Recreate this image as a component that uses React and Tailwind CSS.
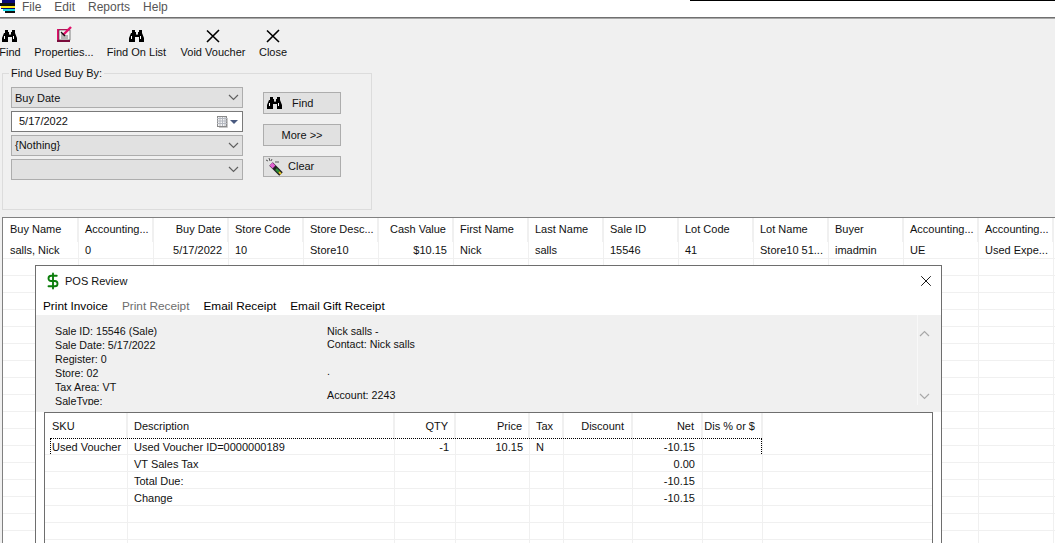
import { X, DollarSign } from 'lucide-react'

const gridCols = [
  { label: 'Buy Name', value: 'salls, Nick', w: 'w-[76px]', pad: 'pl-[7px]' },
  { label: 'Accounting...', value: '0', w: 'w-[75px]', pad: 'pl-[6px]' },
  { label: 'Buy Date', value: '5/17/2022', w: 'w-[75px]', pad: 'justify-end pr-[6px]' },
  { label: 'Store Code', value: '10', w: 'w-[75px]', pad: 'pl-[6px]' },
  { label: 'Store Desc...', value: 'Store10', w: 'w-[75px]', pad: 'pl-[6px]' },
  { label: 'Cash Value', value: '$10.15', w: 'w-[75px]', pad: 'justify-end pr-[6px]' },
  { label: 'First Name', value: 'Nick', w: 'w-[75px]', pad: 'pl-[6px]' },
  { label: 'Last Name', value: 'salls', w: 'w-[75px]', pad: 'pl-[6px]' },
  { label: 'Sale ID', value: '15546', w: 'w-[75px]', pad: 'pl-[6px]' },
  { label: 'Lot Code', value: '41', w: 'w-[75px]', pad: 'pl-[6px]' },
  { label: 'Lot Name', value: 'Store10 51...', w: 'w-[75px]', pad: 'pl-[6px]' },
  { label: 'Buyer', value: 'imadmin', w: 'w-[75px]', pad: 'pl-[6px]' },
  { label: 'Accounting...', value: 'UE', w: 'w-[75px]', pad: 'pl-[6px]' },
  { label: 'Accounting...', value: 'Used Expe...', w: 'w-[75px]', pad: 'pl-[6px]' },
]

const saleCols = [
  { label: 'SKU', w: 'w-[83px]', pad: 'pl-[7px]' },
  { label: 'Description', w: 'w-[267px]', pad: 'pl-[6px]' },
  { label: 'QTY', w: 'w-[61px]', pad: 'pr-[6px] text-right' },
  { label: 'Price', w: 'w-[74px]', pad: 'pr-[6px] text-right' },
  { label: 'Tax', w: 'w-[34px]', pad: 'pl-[6px]' },
  { label: 'Discount', w: 'w-[69px]', pad: 'pr-[7px] text-right' },
  { label: 'Net', w: 'w-[70px]', pad: 'pr-[7px] text-right' },
  { label: 'Dis % or $', w: 'w-[60px]', pad: 'pr-[6px] text-right' },
]

const saleRows = [
  ['Used Voucher', 'Used Voucher ID=0000000189', '-1', '10.15', 'N', '', '-10.15', ''],
  ['', 'VT Sales Tax', '', '', '', '', '0.00', ''],
  ['', 'Total Due:', '', '', '', '', '-10.15', ''],
  ['', 'Change', '', '', '', '', '-10.15', ''],
  ['', '', '', '', '', '', '', ''],
  ['', '', '', '', '', '', '', ''],
  ['', '', '', '', '', '', '', ''],
]

function Binoculars() {
  return (
    <svg width="16" height="14" viewBox="0 0 16 14" className="block">
      <path d="M3 1h3v2h1v2h2V3h1V1h3v3l2 5v4H10V8H6v5H0V9l2-5l1 0z" fill="#000" />
      <rect x="2" y="7" width="1" height="3" fill="#fff" />
      <rect x="11" y="7" width="1" height="3" fill="#fff" />
      <rect x="7" y="5" width="2" height="1" fill="#888" />
    </svg>
  )
}

function Properties() {
  return (
    <svg width="17" height="17" viewBox="0 0 17 17" className="block">
      <rect x="1" y="3" width="13" height="13" fill="#e0106a" />
      <rect x="3" y="4" width="11" height="10" fill="#f4f4f4" stroke="#333" strokeWidth="0.6" />
      <path d="M5 8h3M5 10h7M5 12h7" stroke="#777" strokeWidth="1" />
      <path d="M7 9L15 1" stroke="#e0106a" strokeWidth="2.4" />
      <path d="M5 6l4 4" stroke="#111" strokeWidth="1.2" />
      <rect x="1" y="14" width="13" height="2" fill="#7a0c3c" />
    </svg>
  )
}

function BlackX() {
  return (
    <svg width="14" height="14" viewBox="0 0 14 14" className="block">
      <path d="M1 1.5L13 13M13 1L1 13" stroke="#000" strokeWidth="1.6" />
    </svg>
  )
}

function Wand() {
  return (
    <svg width="18" height="18" viewBox="0 0 18 18" className="block">
      <path d="M0 2l2 1M3 0l1 3M6 1l-1 2M9 4h4" stroke="#333" strokeWidth="0.8" fill="none" />
      <path d="M5 6l10 10" stroke="#222" strokeWidth="5" />
      <path d="M5 6l3 3" stroke="#e060d0" strokeWidth="4" />
      <path d="M10 11l3 3" stroke="#2f8f3a" strokeWidth="2.5" />
      <path d="M13 14l2 2" stroke="#e0c020" strokeWidth="2" />
    </svg>
  )
}

function Logo() {
  return (
    <svg width="16" height="14" viewBox="0 0 16 14" className="block">
      <path d="M2 0h13v3H2z" fill="#0a0a7a" />
      <path d="M0 3h15v3H0z" fill="#101010" />
      <path d="M1 6h14v2H1z" fill="#ffe81a" />
      <path d="M1 8h14v1H1z" fill="#0a0a6a" />
      <path d="M3 9h12v2H3z" fill="#16d8e8" />
      <path d="M5 11h10v2H5z" fill="#101010" />
    </svg>
  )
}

function Chevron({ up, color = '#606060' }) {
  return (
    <svg width="11" height="7" viewBox="0 0 11 7" className="block">
      <path d={up ? 'M1 6l4.5-4.5L10 6' : 'M1 1l4.5 4.5L10 1'} stroke={color} strokeWidth="1.2" fill="none" />
    </svg>
  )
}

function Calendar() {
  return (
    <svg width="11" height="12" viewBox="0 0 11 12" className="block">
      <rect x="0.5" y="0.5" width="9" height="10" fill="#f4f4f4" stroke="#8a8a8a" />
      <path d="M0 2.5h10M0 5h10M0 7.5h10M3 1v9M5.5 1v9M8 1v9" stroke="#b4b8c0" strokeWidth="1" />
      <path d="M10.5 2v9.5H2" stroke="#c8c8c8" fill="none" />
    </svg>
  )
}

function ToolItem({ icon, label, className }) {
  return (
    <div className={`flex flex-col items-center shrink-0 ${className}`}>
      <div className="h-[18px] flex items-end justify-center">{icon}</div>
      <span className="mt-[2px] whitespace-nowrap leading-[14px]">{label}</span>
    </div>
  )
}

function Combo({ text, textClass = '' }) {
  return (
    <div className="h-[21px] w-[232px] border border-[#adadad] bg-[#e1e1e1] flex items-center justify-between pl-[3px] pr-[3px]">
      <span className={textClass}>{text}</span>
      <Chevron />
    </div>
  )
}

function SideButton({ className, children }) {
  return (
    <div className={`w-[78px] border border-[#adadad] bg-[#e1e1e1] flex items-center ${className}`}>{children}</div>
  )
}

export default function App() {
  return (
    <div className="relative w-[1055px] h-[543px] overflow-hidden bg-[#f0f0f0] text-[11px] leading-[14px] text-[#111] font-['Liberation_Sans',Arial,sans-serif]">
      {/* menu */}
      <div className="h-[17px] bg-white flex items-start">
        <div className="w-[16px]"><Logo /></div>
        <div className="flex gap-[13px] ml-[6px] text-[12px] text-[#555]">
          <span>File</span>
          <span>Edit</span>
          <span>Reports</span>
          <span>Help</span>
        </div>
      </div>
      <div className="absolute top-0 left-[690px] right-0 h-px bg-black" />
      <div className="h-px bg-[#707070]" />
      <div className="h-px bg-[#a8a8a8]" />

      {/* toolbar */}
      <div className="flex h-[45px] pt-[6px] items-start">
        <ToolItem icon={<Binoculars />} label="Find" className="w-[20px]" />
        <ToolItem icon={<Properties />} label="Properties..." className="w-[56px] ml-[16px]" />
        <ToolItem icon={<Binoculars />} label="Find On List" className="w-[55px] ml-[17px]" />
        <ToolItem icon={<BlackX />} label="Void Voucher" className="w-[64px] ml-[17px]" />
        <ToolItem icon={<BlackX />} label="Close" className="w-[26px] ml-[15px]" />
      </div>

      {/* search group */}
      <div className="h-[151px]">
        <fieldset className="ml-[2px] mt-[2px] w-[370px] h-[144px] border border-[#dcdcdc] px-[8px] flex">
          <legend className="ml-[-2px] px-[2px] leading-[14px]">Find Used Buy By:</legend>
          <div className="flex">
            <div className="flex flex-col gap-[3px] mt-[7px]">
              <Combo text="Buy Date" />
              <div className="h-[21px] w-[232px] border border-[#7a7a7a] bg-white flex items-center justify-between pl-[7px] pr-[4px]">
                <span className="mb-px">5/17/2022</span>
                <div className="flex items-center gap-[2px]">
                  <Calendar />
                  <div className="w-0 h-0 border-l-[4px] border-r-[4px] border-t-[4px] border-l-transparent border-r-transparent border-t-[#4a5a80]" />
                </div>
              </div>
              <Combo text="{Nothing}" textClass="mb-px" />
              <Combo text="" />
            </div>
            <div className="ml-[20px] mt-[12px] flex flex-col gap-[10px]">
              <SideButton className="h-[22px] pl-[3px]">
                <Binoculars />
                <span className="ml-[9px]">Find</span>
              </SideButton>
              <SideButton className="h-[22px] justify-center">More &gt;&gt;</SideButton>
              <SideButton className="h-[21px] pl-[2px]">
                <Wand />
                <span className="ml-[4px] mb-px">Clear</span>
              </SideButton>
            </div>
          </div>
        </fieldset>
      </div>

      {/* results grid */}
      <div className="ml-[2px] h-[330px] bg-white border-t border-l border-[#808080]">
        <div className="flex h-[24px]">
          {gridCols.map((c, i) => (
            <div key={i} className={`${c.w} shrink-0 flex items-center pb-[2px] border-r-2 border-[#f0f0f0] ${c.pad}`}>
              <span className="whitespace-nowrap">{c.label}</span>
            </div>
          ))}
        </div>
        {[0, 1, 2, 3, 4, 5, 6, 7, 8, 9, 10, 11, 12, 13, 14, 15, 16, 17].map((r) => (
          <div key={r} className="flex h-[17px] border-b border-[#f0f0f0]">
            {gridCols.map((c, i) => (
              <div key={i} className={`${c.w} shrink-0 flex items-center border-r border-[#f0f0f0] ${c.pad}`}>
                {r === 0 && <span className="whitespace-nowrap">{c.value}</span>}
              </div>
            ))}
          </div>
        ))}
      </div>

      {/* POS review dialog */}
      <div className="absolute left-[35px] top-[265px] w-[907px] h-[290px] bg-white border border-[#6e6e6e] flex flex-col">
        <div className="h-[30px] flex items-center shrink-0">
          <DollarSign size={18} strokeWidth={2.5} className="ml-[8px] text-[#0b7d0b]" />
          <span className="ml-[3px]">POS Review</span>
          <X size={18} strokeWidth={1.2} className="ml-auto mr-[6px] text-black" />
        </div>
        <div className="h-[19px] flex items-center gap-[14px] pl-[7px] shrink-0 text-[11.8px] text-black">
          <span>Print Invoice</span>
          <span className="text-[#6d6d6d]">Print Receipt</span>
          <span>Email Receipt</span>
          <span>Email Gift Receipt</span>
        </div>
        <div className="h-[97px] bg-[#f0f0f0] flex shrink-0 text-[10.7px] relative overflow-hidden">
          <div className="ml-[19px] mt-[9px] w-[272px] h-[81px] overflow-hidden">
            <div>Sale ID: 15546 (Sale)</div>
            <div>Sale Date: 5/17/2022</div>
            <div>Register: 0</div>
            <div>Store: 02</div>
            <div>Tax Area: VT</div>
            <div>SaleType:</div>
          </div>
          <div className="mt-[10px] leading-[13px]">
            <div>Nick salls -</div>
            <div>Contact: Nick salls</div>
            <div className="h-[13px]" />
            <div className="mt-[1px]">.</div>
            <div className="h-[13px]" />
            <div className="mt-[-2px]">Account: 2243</div>
          </div>
          <div className="absolute left-[881px] top-0 w-[14px] h-[90px] border-l border-[#f8f8f8] flex flex-col items-center justify-between pt-[15px] pb-[5px]">
            <Chevron up color="#a8a8a8" />
            <Chevron color="#a8a8a8" />
          </div>
        </div>
        <div className="mx-[8px] flex-1 bg-white border-t border-x border-[#6e6e6e] relative">
          <div className="flex h-[25px]">
            {saleCols.map((c) => (
              <div key={c.label} className={`${c.w} shrink-0 h-full flex items-center border-r-2 border-[#f0f0f0] ${c.pad}`}>
                <span className="w-full whitespace-nowrap">{c.label}</span>
              </div>
            ))}
          </div>
          {saleRows.map((row, r) => (
            <div key={r} className="flex h-[17px] border-b border-[#f0f0f0]">
              {saleCols.map((c, i) => (
                <div key={c.label} className={`${c.w} shrink-0 flex items-center pt-px border-r border-[#f0f0f0] ${c.pad}`}>
                  <span className="w-full whitespace-nowrap">{row[i]}</span>
                </div>
              ))}
            </div>
          ))}
          <div className="absolute left-[5px] top-[25px] w-[712px] h-[16px] border-t border-x border-dotted border-black" />
        </div>
      </div>
    </div>
  )
}
